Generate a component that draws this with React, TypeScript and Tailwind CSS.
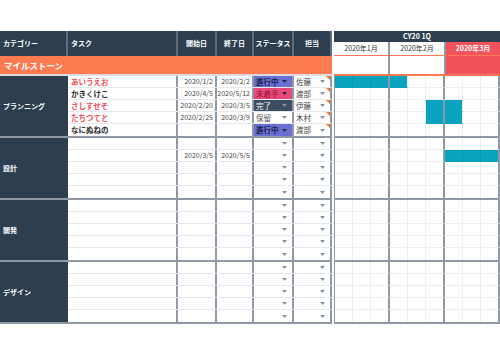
import React from 'react';

/**
 * Gantt Sheet
 * スプレッドシート風のガントチャート
 */

type Status = '進行中' | '未着手' | '完了' | '保留' | '';

interface Row {
  task?: string;
  red?: boolean;
  start?: string;
  end?: string;
  status?: Status;
  who?: string;
  note?: boolean;
  bar?: [number, number];
}

interface Section {
  name: string;
  rows: Row[];
}

const FONT = { fontFamily: '"Noto Sans CJK JP", "Noto Sans", sans-serif' };

const blank: Row = {};

const SECTIONS: Section[] = [
  {
    name: 'プランニング',
    rows: [
      { task: 'あいうえお', red: true, start: '2020/1/2', end: '2020/2/2', status: '進行中', who: '佐藤', note: true, bar: [0, 4] },
      { task: 'かきくけこ', start: '2020/4/5', end: '2020/5/12', status: '未着手', who: '渡部', note: true },
      { task: 'さしすせそ', red: true, start: '2020/2/20', end: '2020/3/5', status: '完了', who: '伊藤', note: true, bar: [5, 7] },
      { task: 'たちつてと', red: true, start: '2020/2/25', end: '2020/3/9', status: '保留', who: '木村', note: true, bar: [5, 7] },
      { task: 'なにぬねの', status: '進行中', who: '渡部', note: true },
    ],
  },
  {
    name: '設計',
    rows: [blank, { start: '2020/3/5', end: '2020/5/5', bar: [6, 9] }, blank, blank, blank],
  },
  { name: '開発', rows: [blank, blank, blank, blank, blank] },
  { name: 'デザイン', rows: [blank, blank, blank, blank, blank] },
];

const MONTHS = ['2020年1月', '2020年2月', '2020年3月'];

function Caret({ dark }: { dark?: boolean }) {
  return (
    <svg width="5" height="3" viewBox="0 0 5 3" className="shrink-0">
      <path d="M0 0 L5 0 L2.5 3 Z" fill={dark ? '#1f2a44' : '#8a8f98'} />
    </svg>
  );
}

function StatusCell({ status }: { status?: Status }) {
  let cls = 'bg-white text-[#555]';
  let dark = false;
  if (status === '進行中') {
    cls = 'bg-[#6a6fd3] text-[#1b1f45] font-bold';
    dark = true;
  } else if (status === '未着手') {
    cls = 'bg-[#ea4879] text-[#8c1436]';
    dark = true;
  } else if (status === '完了') {
    cls = 'bg-[#3d4d63] text-white';
  }
  return (
    <div className={`w-[40px] h-full flex items-center justify-between pl-[2px] pr-[5px] border-r-2 border-[#8f99a6] text-[7.5px] ${cls}`}>
      <span>{status}</span>
      <Caret dark={dark} />
    </div>
  );
}

function TableRow({ row, last }: { row: Row; last: boolean }) {
  return (
    <div className={`flex h-[12px] text-[7px] leading-none whitespace-nowrap ${last ? '' : 'border-b border-[#e6e8eb]'}`}>
      <div
        className={`w-[110px] h-full flex items-center pl-[3px] border-r-2 border-[#8f99a6] font-bold text-[7.5px] ${
          row.red ? 'text-[#f0505a]' : 'text-[#2b2b2b]'
        }`}
      >
        {row.task}
      </div>
      <div className="w-[39px] h-full flex items-center justify-end pr-[2px] border-r-2 border-[#8f99a6] text-[#444]">
        {row.start}
      </div>
      <div className="w-[37px] h-full flex items-center justify-end pr-[2px] border-r-2 border-[#8f99a6] text-[#444]">
        {row.end}
      </div>
      <StatusCell status={row.status} />
      <div className="relative w-[38px] h-full flex items-center justify-between pl-[2px] pr-[5px] border-r-2 border-[#8f99a6] text-[#444] text-[7.5px]">
        <span>{row.who}</span>
        <Caret />
        {row.note && (
          <span className="absolute top-0 right-0 w-0 h-0 border-t-[4px] border-l-[4px] border-t-[#ff6a2c] border-l-transparent" />
        )}
      </div>
    </div>
  );
}

function GanttRow({ row, last }: { row: Row; last: boolean }) {
  return (
    <div className="flex h-[12px]">
      {Array.from({ length: 9 }).map((_, i) => {
        const filled = row.bar && i >= row.bar[0] && i < row.bar[1];
        const monthEnd = i % 3 === 2;
        const nextFilled = row.bar && i + 1 >= row.bar[0] && i + 1 < row.bar[1];
        return (
          <div
            key={i}
            className={`flex-1 h-full ${filled ? 'bg-[#0aa3bd]' : 'bg-white'} ${
              last ? '' : filled ? 'border-b border-[#0aa3bd]' : 'border-b border-[#eceef0]'
            } ${
              monthEnd
                ? 'border-r-2 border-r-[#8f99a6]'
                : filled && nextFilled
                ? 'border-r border-r-[#0b93ab]'
                : 'border-r border-r-[#eceef0]'
            }`}
          />
        );
      })}
    </div>
  );
}

export default function App() {
  return (
    <div className="w-[500px] h-[357px] bg-white overflow-hidden pt-[31px]" style={FONT}>
      <div className="flex">
        {/* 左側: タスク表 */}
        <div className="w-[332px] shrink-0">
          {/* Header */}
          <div className="flex h-[25px] bg-[#2c3e50] text-white text-[7px] font-bold whitespace-nowrap">
            <div className="w-[68px] flex items-center pl-[3px] border-r-2 border-[#5d6b7b]">カテゴリー</div>
            <div className="w-[110px] flex items-center pl-[3px] border-r-2 border-[#5d6b7b]">タスク</div>
            <div className="w-[39px] flex items-center justify-center border-r-2 border-[#5d6b7b]">開始日</div>
            <div className="w-[37px] flex items-center justify-center border-r-2 border-[#5d6b7b]">終了日</div>
            <div className="w-[40px] flex items-center justify-center border-r-2 border-[#5d6b7b]">ステータス</div>
            <div className="w-[38px] flex items-center justify-center border-r-2 border-[#5d6b7b]">担当</div>
          </div>
          {/* Milestone */}
          <div className="h-[20px] bg-[#fe7a52] text-white text-[8.5px] font-bold flex items-center pl-[4px] border-b-2 border-[#d9dde2]">
            マイルストーン
          </div>
          {/* Sections */}
          {SECTIONS.map((s) => (
            <div key={s.name} className="flex border-b-2 border-[#8f99a6]">
              <div className="w-[68px] shrink-0 bg-[#2c3e50] text-white text-[7px] font-bold flex items-center pl-[3px]">
                {s.name}
              </div>
              <div className="flex-1">
                {s.rows.map((r, i) => (
                  <TableRow key={i} row={r} last={i === s.rows.length - 1} />
                ))}
              </div>
            </div>
          ))}
        </div>

        {/* 右側: ガント */}
        <div className="flex-1 ml-[2px]">
          <div className="h-[11px] bg-[#2c3e50] text-white text-[7px] font-bold flex items-center justify-center">
            CY20 1Q
          </div>
          <div className="flex h-[14px] text-[7px] border-b border-[#fe7a52]">
            {MONTHS.map((m, i) => (
              <div
                key={m}
                className={`flex-1 flex items-center justify-center ${
                  i === 2 ? 'bg-[#f1535c] text-white font-bold' : 'text-[#333] border-r-2 border-[#8f99a6]'
                }`}
              >
                {m}
              </div>
            ))}
          </div>
          <div className="flex h-[20px] border-b-2 border-[#fe7a52]">
            {MONTHS.map((m, i) => (
              <div key={m} className={`flex-1 ${i === 2 ? 'bg-[#f1535c]' : 'bg-white border-r-2 border-[#8f99a6]'}`} />
            ))}
          </div>
          {SECTIONS.map((s) => (
            <div key={s.name} className="border-b-2 border-[#8f99a6] border-l border-l-[#8f99a6]">
              {s.rows.map((r, i) => (
                <GanttRow key={i} row={r} last={i === s.rows.length - 1} />
              ))}
            </div>
          ))}
        </div>
      </div>
    </div>
  );
}
